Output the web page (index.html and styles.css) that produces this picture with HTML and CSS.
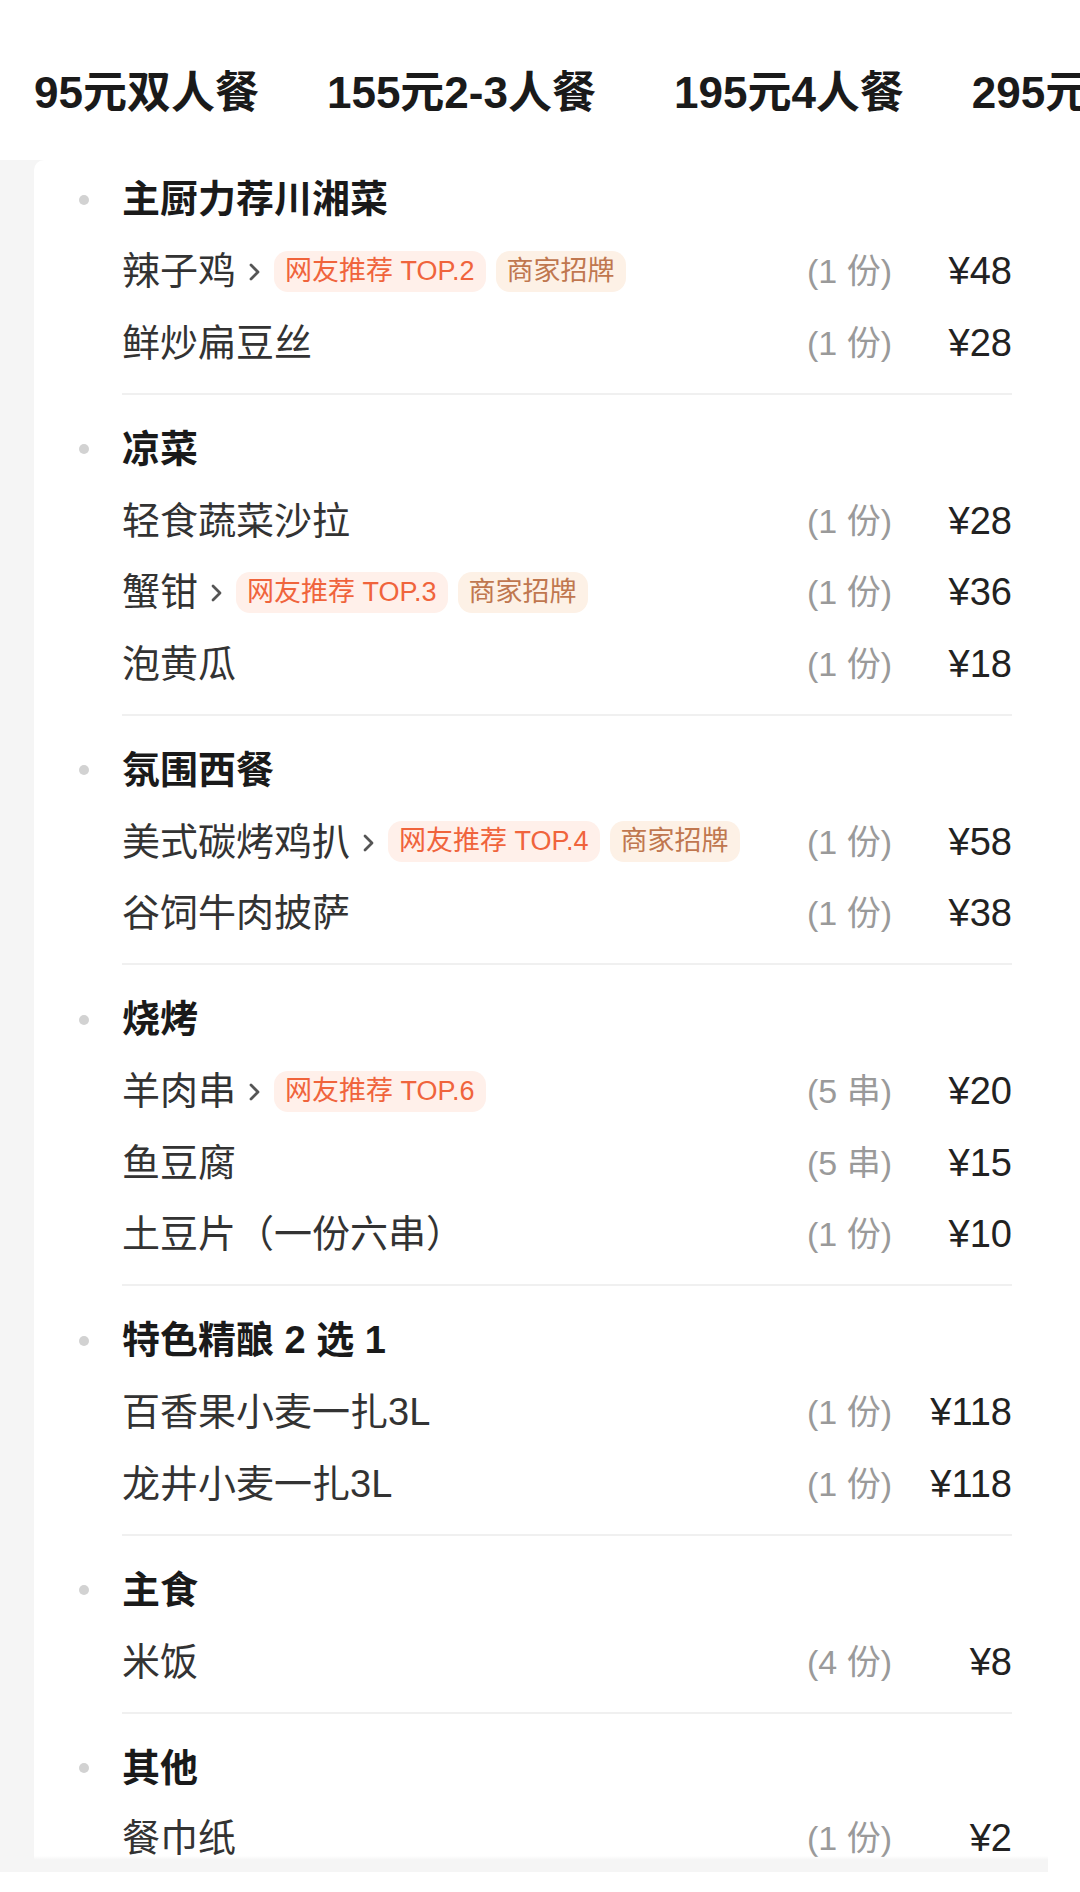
FILE: index.html
```html
<!DOCTYPE html>
<html lang="zh-CN">
<head>
  <meta charset="UTF-8">
  <meta name="viewport" content="width=device-width, initial-scale=1.0">
  <title>套餐菜单</title>
  <link rel="stylesheet" href="styles.css">
</head>
<body>
  <nav class="tabs">
    <span class="tab">95元双人餐</span>
    <span class="tab">155元2-3人餐</span>
    <span class="tab">195元4人餐</span>
    <span class="tab">295元4-6人餐</span>
  </nav>

  <main class="panel">
    <div class="card">

      <section class="section">
        <div class="section-body">
          <h3 class="section-title">主厨力荐川湘菜</h3>
          <div class="dish">
            <span class="name">辣子鸡</span>
            <svg class="arrow" viewBox="0 0 16 24"><path d="M4 5 L11 12 L4 19"/></svg>
            <span class="tag tag-hot">网友推荐 TOP.2</span>
            <span class="tag tag-shop">商家招牌</span>
            <span class="qty">(1 份)</span>
            <span class="price">¥48</span>
          </div>
          <div class="dish">
            <span class="name">鲜炒扁豆丝</span>
            <span class="qty">(1 份)</span>
            <span class="price">¥28</span>
          </div>
        </div>
      </section>

      <section class="section">
        <div class="section-body">
          <h3 class="section-title">凉菜</h3>
          <div class="dish">
            <span class="name">轻食蔬菜沙拉</span>
            <span class="qty">(1 份)</span>
            <span class="price">¥28</span>
          </div>
          <div class="dish">
            <span class="name">蟹钳</span>
            <svg class="arrow" viewBox="0 0 16 24"><path d="M4 5 L11 12 L4 19"/></svg>
            <span class="tag tag-hot">网友推荐 TOP.3</span>
            <span class="tag tag-shop">商家招牌</span>
            <span class="qty">(1 份)</span>
            <span class="price">¥36</span>
          </div>
          <div class="dish">
            <span class="name">泡黄瓜</span>
            <span class="qty">(1 份)</span>
            <span class="price">¥18</span>
          </div>
        </div>
      </section>

      <section class="section">
        <div class="section-body">
          <h3 class="section-title">氛围西餐</h3>
          <div class="dish">
            <span class="name">美式碳烤鸡扒</span>
            <svg class="arrow" viewBox="0 0 16 24"><path d="M4 5 L11 12 L4 19"/></svg>
            <span class="tag tag-hot">网友推荐 TOP.4</span>
            <span class="tag tag-shop">商家招牌</span>
            <span class="qty">(1 份)</span>
            <span class="price">¥58</span>
          </div>
          <div class="dish">
            <span class="name">谷饲牛肉披萨</span>
            <span class="qty">(1 份)</span>
            <span class="price">¥38</span>
          </div>
        </div>
      </section>

      <section class="section">
        <div class="section-body">
          <h3 class="section-title">烧烤</h3>
          <div class="dish">
            <span class="name">羊肉串</span>
            <svg class="arrow" viewBox="0 0 16 24"><path d="M4 5 L11 12 L4 19"/></svg>
            <span class="tag tag-hot">网友推荐 TOP.6</span>
            <span class="qty">(5 串)</span>
            <span class="price">¥20</span>
          </div>
          <div class="dish">
            <span class="name">鱼豆腐</span>
            <span class="qty">(5 串)</span>
            <span class="price">¥15</span>
          </div>
          <div class="dish">
            <span class="name">土豆片（一份六串）</span>
            <span class="qty">(1 份)</span>
            <span class="price">¥10</span>
          </div>
        </div>
      </section>

      <section class="section">
        <div class="section-body">
          <h3 class="section-title">特色精酿 2 选 1</h3>
          <div class="dish">
            <span class="name">百香果小麦一扎3L</span>
            <span class="qty">(1 份)</span>
            <span class="price">¥118</span>
          </div>
          <div class="dish">
            <span class="name">龙井小麦一扎3L</span>
            <span class="qty">(1 份)</span>
            <span class="price">¥118</span>
          </div>
        </div>
      </section>

      <section class="section">
        <div class="section-body">
          <h3 class="section-title">主食</h3>
          <div class="dish">
            <span class="name">米饭</span>
            <span class="qty">(4 份)</span>
            <span class="price">¥8</span>
          </div>
        </div>
      </section>

      <section class="section">
        <div class="section-body">
          <h3 class="section-title">其他</h3>
          <div class="dish">
            <span class="name">餐巾纸</span>
            <span class="qty">(1 份)</span>
            <span class="price">¥2</span>
          </div>
        </div>
      </section>

    </div>
  </main>
</body>
</html>
```

FILE: styles.css
```css
body {
  font-family: "Liberation Sans", "Noto Sans CJK SC", sans-serif;
  margin: 0;
  padding: 0;
  background-color: #fff;
  color: #333;
  width: 1080px;
  height: 1892px;
  overflow: hidden;
}
.tabs {
  display: flex;
  gap: 68px;
  height: 160px;
  box-sizing: border-box;
  padding: 64px 0 0 34px;
  white-space: nowrap;
  overflow: hidden;
}
.tab {
  font-size: 44px;
  font-weight: 700;
  line-height: 58px;
  color: #1a1a1a;
}
.tab:nth-child(2) {
  margin-right: 10px;
}
.panel {
  width: 1048px;
  background-color: #f5f5f5;
  padding: 0 0 12px 34px;
  box-sizing: border-box;
}
.card {
  position: relative;
  background-color: #fff;
  border-radius: 10px 0 0 0;
  height: 1700px;
  overflow: hidden;
}
.card::after {
  content: "";
  position: absolute;
  left: 0;
  right: 0;
  bottom: 0;
  height: 4px;
  background: linear-gradient(rgba(245, 245, 245, 0), #f5f5f5);
}
.section {
  padding: 0 36px 0 88px;
}
.section-body {
  padding: 19px 0 14px;
  border-bottom: 2px solid #f0f0f0;
}
.section:first-child .section-body {
  padding-top: 4px;
}
.section:last-child .section-body {
  border-bottom: none;
  padding-bottom: 0;
}
.section-title {
  position: relative;
  margin: 0;
  height: 71.5px;
  line-height: 71.5px;
  font-size: 38px;
  font-weight: 700;
  color: #1a1a1a;
}
.section-title::before {
  content: "";
  position: absolute;
  left: -43px;
  top: 50%;
  width: 10px;
  height: 10px;
  margin-top: -5px;
  border-radius: 50%;
  background-color: #d2d2d2;
}
.dish {
  display: flex;
  align-items: center;
  height: 71.5px;
  font-size: 38px;
  line-height: 40px;
  white-space: nowrap;
}
.section:last-child .dish {
  height: 68px;
}
.name {
  color: #333;
}
.arrow {
  width: 16px;
  height: 24px;
  margin: 2px 11px 0 11px;
  fill: none;
  stroke: #555;
  stroke-width: 2.8;
  stroke-linecap: round;
  stroke-linejoin: round;
}
.tag {
  height: 41px;
  line-height: 41px;
  padding: 0 11px;
  margin-right: 10px;
  border-radius: 14px;
  font-size: 27px;
}
.tag-hot {
  background-color: #fff0ea;
  color: #f0643c;
}
.tag-shop {
  background-color: #fdf1e6;
  color: #c0774f;
}
.qty {
  margin-left: auto;
  font-size: 34px;
  color: #9a9a9a;
}
.price {
  width: 120px;
  text-align: right;
  color: #222;
}
```
